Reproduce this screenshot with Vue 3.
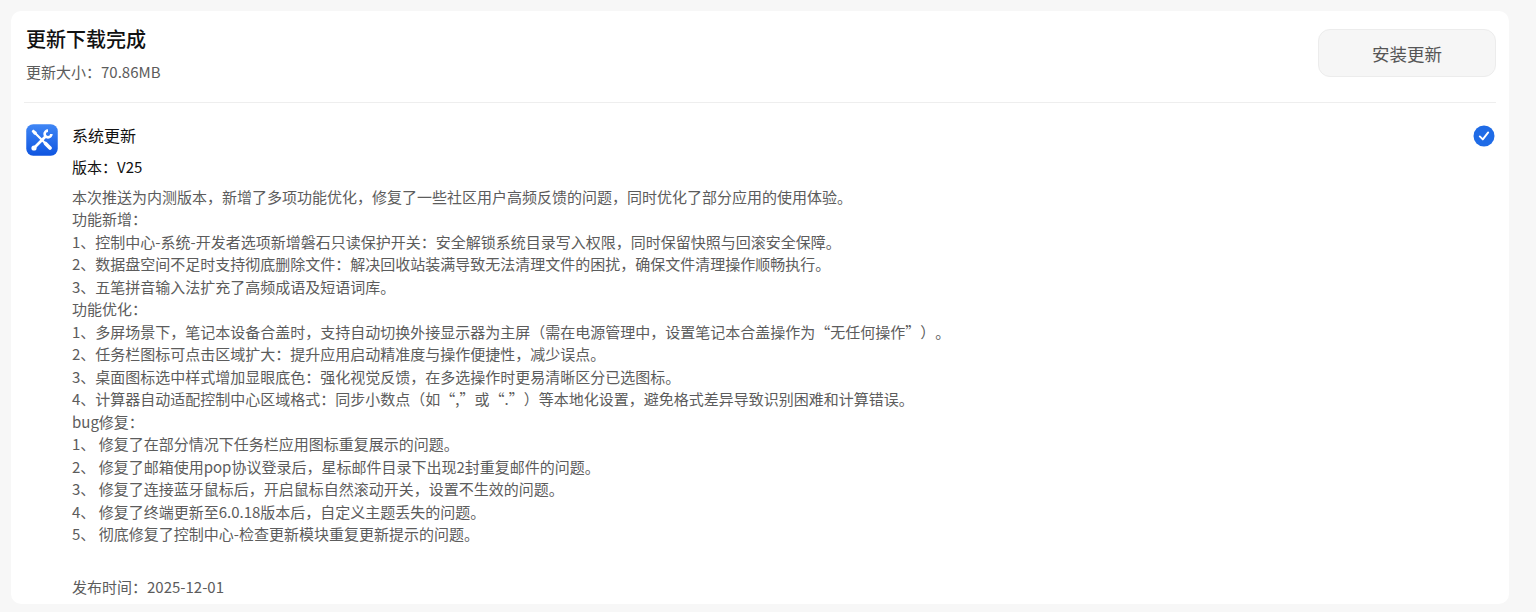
<template>
  <div class="page">
    <div class="card">
      <header class="head">
        <div class="head-text">
          <h1 class="title">更新下载完成</h1>
          <p class="size">更新大小：70.86MB</p>
        </div>
        <button class="install">安装更新</button>
      </header>

      <section class="item">
        <svg class="app-icon" viewBox="0 0 32 32" width="32" height="32">
          <defs>
            <linearGradient id="tile" x1="0" y1="0" x2="0" y2="1">
              <stop offset="0" stop-color="#3f86f5" />
              <stop offset="1" stop-color="#0f55e0" />
            </linearGradient>
          </defs>
          <rect x="0.25" y="0.25" width="31.5" height="31.5" rx="7" fill="url(#tile)" />
          <g fill="none" stroke="#fff" stroke-linecap="round">
            <path d="M7.5 7.5 18 18" stroke-width="2.2" />
            <path d="M19.5 19.5 24 24" stroke-width="3.8" />
            <path d="M8.5 23.5 19.5 12.5" stroke-width="2.8" />
            <path d="M22 6.6A3.4 3.4 0 1 0 25.4 10" stroke-width="2.6" stroke-linecap="butt" />
          </g>
          <path d="M5.6 7.2 7.2 5.6 10.6 8l.4 2-1 1-2-.4z" fill="#fff" />
          <circle cx="8" cy="24" r="2.6" fill="#fff" />
        </svg>
        <div class="item-body">
          <div class="name">系统更新</div>
          <div class="version">版本：V25</div>
          <div class="notes">
            <div v-for="(line, i) in notes" :key="i">{{ line }}</div>
          </div>
          <div class="date">发布时间：2025-12-01</div>
        </div>
        <svg class="check" viewBox="0 0 22 22" width="22" height="22">
          <circle cx="11" cy="11" r="10.5" fill="#1f6be6" />
          <path d="M6.8 11.4l3 3 5.4-7" fill="none" stroke="#fff" stroke-width="1.9" stroke-linecap="round" stroke-linejoin="round" />
        </svg>
      </section>
    </div>
  </div>
</template>

<script setup>
const notes = [
  '本次推送为内测版本，新增了多项功能优化，修复了一些社区用户高频反馈的问题，同时优化了部分应用的使用体验。',
  '功能新增：',
  '1、控制中心-系统-开发者选项新增磐石只读保护开关：安全解锁系统目录写入权限，同时保留快照与回滚安全保障。',
  '2、数据盘空间不足时支持彻底删除文件：解决回收站装满导致无法清理文件的困扰，确保文件清理操作顺畅执行。',
  '3、五笔拼音输入法扩充了高频成语及短语词库。',
  '功能优化：',
  '1、多屏场景下，笔记本设备合盖时，支持自动切换外接显示器为主屏（需在电源管理中，设置笔记本合盖操作为“无任何操作”）。',
  '2、任务栏图标可点击区域扩大：提升应用启动精准度与操作便捷性，减少误点。',
  '3、桌面图标选中样式增加显眼底色：强化视觉反馈，在多选操作时更易清晰区分已选图标。',
  '4、计算器自动适配控制中心区域格式：同步小数点（如“,”或“.”）等本地化设置，避免格式差异导致识别困难和计算错误。',
  'bug修复：',
  '1、 修复了在部分情况下任务栏应用图标重复展示的问题。',
  '2、 修复了邮箱使用pop协议登录后，星标邮件目录下出现2封重复邮件的问题。',
  '3、 修复了连接蓝牙鼠标后，开启鼠标自然滚动开关，设置不生效的问题。',
  '4、 修复了终端更新至6.0.18版本后，自定义主题丢失的问题。',
  '5、 彻底修复了控制中心-检查更新模块重复更新提示的问题。',
]
</script>

<style>
html,
body {
  margin: 0;
  background: #f7f7f7;
}
</style>

<style scoped>
.page {
  height: 612px;
  box-sizing: border-box;
  padding: 11px 27px 8px 11px;
  overflow: hidden;
  font-family: "Noto Sans CJK SC", "Noto Sans", sans-serif;
  font-size: 15px;
  color: #5c5c5c;
  text-spacing-trim: space-all;
}

.card {
  height: 100%;
  box-sizing: border-box;
  padding: 0 13px 0 13px;
  background: #fff;
  border-radius: 10px;
  overflow: hidden;
}

.head {
  display: flex;
  justify-content: space-between;
  height: 91px;
  border-bottom: 1px solid #eeeeee;
}

.head-text {
  padding: 13px 0 0 2px;
}

.title {
  margin: 0;
  font-size: 20px;
  font-weight: 500;
  line-height: 30px;
  color: #111;
}

.size {
  margin: 7px 0 0;
  line-height: 22px;
}

.install {
  width: 178px;
  height: 48px;
  margin-top: 18px;
  background: #f6f6f6;
  border: 1px solid #ececec;
  border-radius: 12px;
  font-family: inherit;
  font-size: 17.5px;
  color: #555;
}

.item {
  display: flex;
  padding: 20px 2px 0;
}

.app-icon {
  flex-shrink: 0;
  margin-top: 1px;
}

.item-body {
  flex: 1;
  margin-left: 14px;
  line-height: 22.5px;
}

.name {
  font-size: 16px;
  line-height: 24px;
  color: #111;
}

.version {
  margin-top: 9px;
  color: #111;
}

.notes {
  margin-top: 7px;
}

.date {
  margin-top: 30px;
}

.check {
  flex-shrink: 0;
  margin-top: 2px;
  margin-right: -0.5px;
}
</style>
